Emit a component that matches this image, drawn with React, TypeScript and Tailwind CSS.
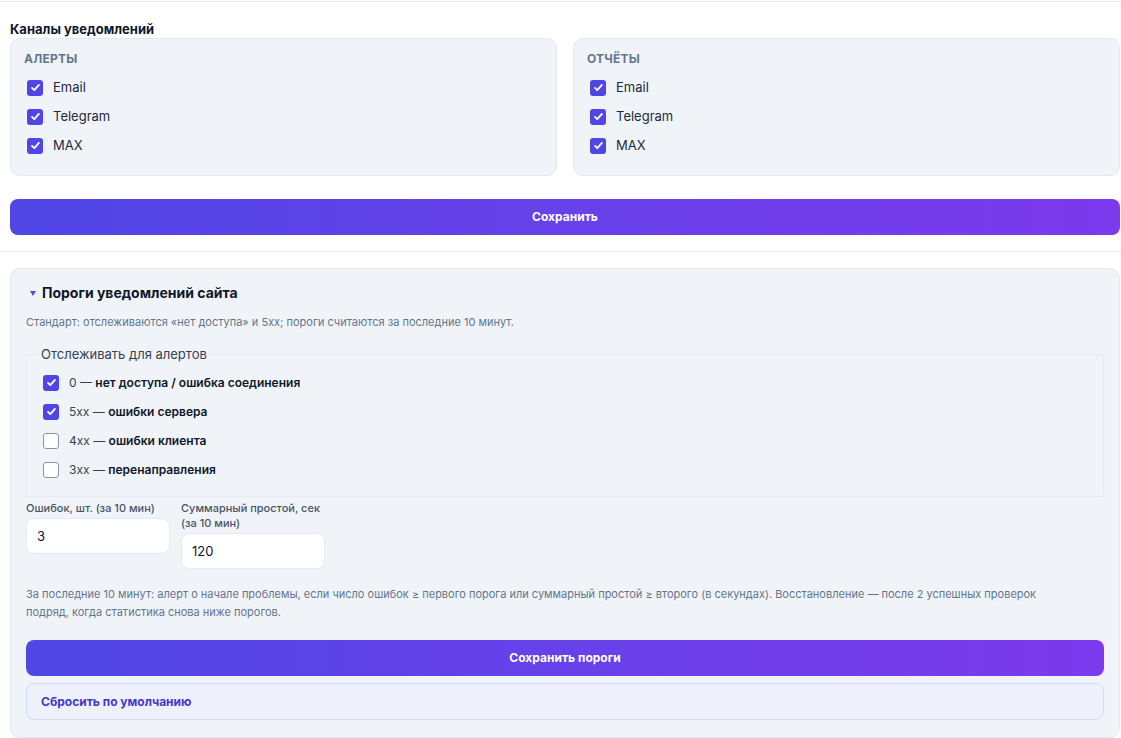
import React from "react";

const Box = ({ checked }: { checked: boolean }) =>
  checked ? (
    <span className="flex h-[16px] w-[16px] shrink-0 items-center justify-center rounded-[3px] bg-[#4f46e5]">
      <svg width="11" height="11" viewBox="0 0 12 12" fill="none">
        <path d="M2.2 6.4l2.5 2.4 5-5.6" stroke="white" strokeWidth="2" strokeLinecap="round" strokeLinejoin="round" />
      </svg>
    </span>
  ) : (
    <span className="h-[16px] w-[16px] shrink-0 rounded-[3px] border border-[#8d93a0] bg-white" />
  );

const channels = ["Email", "Telegram", "MAX"];

const ChannelCard = ({ title }: { title: string }) => (
  <div className="rounded-[10px] border border-[#e2e8f0] bg-[#f0f4f9] px-[13px] pt-[12px] pb-[15px]">
    <div className="mb-[6px] text-[12px] leading-4 font-bold tracking-[0.02em] text-[#64748b]">{title}</div>
    {channels.map((c) => (
      <label key={c} className="flex h-[29px] items-center gap-[10px] pl-[3px] text-[13px] text-[#1e293b]">
        <Box checked />
        {c}
      </label>
    ))}
  </div>
);

const codes = [
  { code: "0", text: "нет доступа / ошибка соединения", on: true },
  { code: "5xx", text: "ошибки сервера", on: true },
  { code: "4xx", text: "ошибки клиента", on: false },
  { code: "3xx", text: "перенаправления", on: false },
];

const gradient = "bg-gradient-to-r from-[#4f46e5] to-[#7c3aed]";

export default function App() {
  return (
    <div className="min-h-screen bg-white font-['Inter','Noto_Sans',sans-serif] text-[#0f172a]">
      <div className="mt-px h-px bg-[#e5e7eb]" />
      <div className="pr-px pl-[10px]">
        <h3 className="mt-[19px] mb-[1px] text-[13px] leading-4 font-bold">Каналы уведомлений</h3>
        <div className="grid grid-cols-2 gap-[16px]">
          <ChannelCard title="АЛЕРТЫ" />
          <ChannelCard title="ОТЧЁТЫ" />
        </div>
        <button className={`mt-[23px] h-[36px] w-full rounded-[8px] ${gradient} text-[12px] font-bold text-white`}>
          Сохранить
        </button>
      </div>
      <div className="mt-[16px] h-px bg-[#e5e7eb]" />

      <div className="pt-[16px] pr-px pl-[10px]">
        <div className="rounded-[10px] border border-[#e2e8f0] bg-[#f0f4f9] px-[15px] pt-[14px] pb-[17px]">
          <div className="flex items-center gap-[6px] pl-[4px] text-[14px] leading-5 font-bold">
            <svg width="6" height="5" viewBox="0 0 6 5">
              <polygon points="0,0 6,0 3,5" fill="#4f46e5" />
            </svg>
            Пороги уведомлений сайта
          </div>
          <p className="mt-[11px] text-[11px] leading-4 text-[#64748b]">
            Стандарт: отслеживаются «нет доступа» и 5xx; пороги считаются за последние 10 минут.
          </p>

          <fieldset className="mt-[16px] rounded-[2px] border border-[#e6eaf1] px-[16px] pb-[12px]">
            <legend className="-ml-[2px] text-[13px] leading-4 text-[#334155]">Отслеживать для алертов</legend>
            <div className="pt-[6px]">
              {codes.map((c) => (
                <label key={c.code} className="flex h-[29px] items-center gap-[10px] text-[12px] text-[#334155]">
                  <Box checked={c.on} />
                  <span>
                    {c.code} — <span className="font-semibold text-[#0f172a]">{c.text}</span>
                  </span>
                </label>
              ))}
            </div>
          </fieldset>

          <div className="mt-[4px] flex items-start gap-[11px]">
            <div className="w-[144px]">
              <div className="text-[11px] leading-[15px] font-medium text-[#475569]">Ошибок, шт. (за 10 мин)</div>
              <input
                defaultValue="3"
                className="mt-[2px] h-[36px] w-full rounded-[8px] border border-[#e5e9f0] bg-white px-[10px] text-[13px] text-[#0f172a] outline-none"
              />
            </div>
            <div className="w-[144px]">
              <div className="text-[11px] leading-[15px] font-medium text-[#475569]">
                Суммарный простой, сек
                <br />
                (за 10 мин)
              </div>
              <input
                defaultValue="120"
                className="mt-[2px] h-[36px] w-full rounded-[8px] border border-[#e5e9f0] bg-white px-[10px] text-[13px] text-[#0f172a] outline-none"
              />
            </div>
          </div>

          <p className="mt-[16px] text-[11px] leading-[18px] text-[#64748b]">
            За последние 10 минут: алерт о начале проблемы, если число ошибок ≥ первого порога или суммарный простой ≥
            второго (в секундах). Восстановление — после 2 успешных проверок
            <br />
            подряд, когда статистика снова ниже порогов.
          </p>

          <button className={`mt-[19px] h-[36px] w-full rounded-[8px] ${gradient} text-[12px] font-bold text-white`}>
            Сохранить пороги
          </button>
          <button className="mt-[7px] flex h-[37px] w-full items-center rounded-[8px] border border-[#d5daf5] bg-[#eef1fc] px-[14px] text-[12px] font-bold text-[#4338ca]">
            Сбросить по умолчанию
          </button>
        </div>
      </div>
    </div>
  );
}
